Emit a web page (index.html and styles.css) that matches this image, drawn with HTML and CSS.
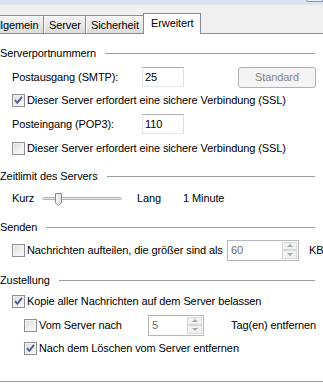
FILE: index.html
```html
<!DOCTYPE html>
<html lang="de">
<head>
<meta charset="utf-8">
<title>Erweitert</title>
<link rel="stylesheet" href="styles.css">
</head>
<body>
<div class="window">
  <div class="titlestrip"><span class="tsbtn"></span></div>
  <div class="tabbar">
    <div class="tab t1">Allgemein</div>
    <div class="tab t2">Server</div>
    <div class="tab t3">Sicherheit</div>
    <div class="tab active">Erweitert</div>
    <div class="tabfill"></div>
  </div>
  <div class="panel">
    <div class="group-h g1"><span>Serverportnummern</span><i class="rule"></i></div>

    <div class="row r1">
      <span class="lbl">Postausgang (SMTP):</span>
      <span class="input">25</span>
      <span class="btn">Standard</span>
    </div>
    <div class="row r2">
      <span class="cb"><svg width="11" height="11" viewBox="0 0 11 11"><path d="M2 5.2 L4.3 7.8 L9 1.8" fill="none" stroke="#4a5d96" stroke-width="1.9"/></svg></span>
      <span>Dieser Server erfordert eine sichere Verbindung (SSL)</span>
    </div>
    <div class="row r3">
      <span class="lbl">Posteingang (POP3):</span>
      <span class="input">110</span>
    </div>
    <div class="row r4">
      <span class="cb"></span>
      <span>Dieser Server erfordert eine sichere Verbindung (SSL)</span>
    </div>

    <div class="group-h g2"><span>Zeitlimit des Servers</span><i class="rule"></i></div>
    <div class="row r5">
      <span class="kurz">Kurz</span>
      <svg class="slider" width="80" height="16" viewBox="0 0 80 16">
        <defs>
          <linearGradient id="th" x1="0" y1="0" x2="1" y2="0">
            <stop offset="0" stop-color="#fbfbfb"/>
            <stop offset="1" stop-color="#dedede"/>
          </linearGradient>
        </defs>
        <rect x="0.5" y="7.5" width="79" height="2" rx="1" fill="#e7eaea" stroke="#b0b4b8"/>
        <path d="M13.5 3.5 H19.5 V13 L16.5 15.5 L13.5 13 Z" fill="url(#th)" stroke="#8a8a8a"/>
      </svg>
      <span class="lang">Lang</span>
      <span>1 Minute</span>
    </div>

    <div class="group-h g3"><span>Senden</span><i class="rule"></i></div>
    <div class="row r6">
      <span class="cb"></span>
      <span class="split">Nachrichten aufteilen, die größer sind als</span>
      <span class="spin kb"><span class="val">60</span><span class="arrows"><span class="up"></span><span class="dn"></span></span></span>
      <span class="unit">KB</span>
    </div>

    <div class="group-h g4"><span>Zustellung</span><i class="rule"></i></div>
    <div class="row r7">
      <span class="cb"><svg width="11" height="11" viewBox="0 0 11 11"><path d="M2 5.2 L4.3 7.8 L9 1.8" fill="none" stroke="#4a5d96" stroke-width="1.9"/></svg></span>
      <span>Kopie aller Nachrichten auf dem Server belassen</span>
    </div>
    <div class="row r8 sub">
      <span class="cb"></span>
      <span class="vom">Vom Server nach</span>
      <span class="spin days"><span class="val">5</span><span class="arrows"><span class="up"></span><span class="dn"></span></span></span>
      <span class="unit2">Tag(en) entfernen</span>
    </div>
    <div class="row r9 sub">
      <span class="cb"><svg width="11" height="11" viewBox="0 0 11 11"><path d="M2 5.2 L4.3 7.8 L9 1.8" fill="none" stroke="#4a5d96" stroke-width="1.9"/></svg></span>
      <span>Nach dem Löschen vom Server entfernen</span>
    </div>
  </div>
</div>
</body>
</html>
```

FILE: styles.css
```css
html, body {
  margin: 0;
  padding: 0;
  background: #ffffff;
}
body {
  font-family: "Liberation Sans", Arial, sans-serif;
  font-size: 11px;
  letter-spacing: -0.1px;
  color: #000;
  width: 323px;
  height: 387px;
  overflow: hidden;
}
.window {
  width: 323px;
  overflow: hidden;
}
.titlestrip {
  height: 5px;
  background: #dae5f2;
  display: flex;
  justify-content: flex-end;
}
.tsbtn {
  width: 15px;
  height: 1px;
  border: 1px solid #8a97a8;
  border-top: none;
  background: #e8eef6;
  border-bottom-left-radius: 2px;
}
.tabbar {
  height: 29px;
  background: #f0f0f0;
  display: flex;
  align-items: flex-end;
}
.tab {
  box-sizing: border-box;
  height: 19px;
  border: 1px solid #898c95;
  background: linear-gradient(#f4f4f4, #e9e9e9 50%, #dcdcdc);
  box-shadow: inset 1px 1px 0 #fcfcfc;
  padding: 3px 0 0 5px;
  line-height: 12px;
  white-space: nowrap;
  flex: none;
}
.t1 {
  width: 59px;
  margin-left: -15px;
}
.t2 {
  width: 43px;
  margin-left: -1px;
}
.t3 {
  width: 59px;
  margin-left: -1px;
}
.tab.active {
  width: 58px;
  height: 21px;
  margin-left: -1px;
  background: #ffffff;
  box-shadow: none;
  border-bottom: none;
  padding: 3px 0 0 7px;
}
.tabfill {
  flex: 1;
  height: 0;
  border-bottom: 1px solid #898c95;
}
.panel {
  background: #ffffff;
  height: 348px;
  border-bottom: 1px solid #a0a0a0;
  padding-top: 12px;
  box-sizing: border-box;
}
.group-h {
  height: 14px;
  display: flex;
  align-items: center;
  padding-right: 8px;
  line-height: 14px;
}
.group-h .rule {
  flex: 1;
  height: 1px;
  background: #a0a0a0;
  margin-left: 9px;
}
.g2 { margin-top: 13px; }
.g3 { margin-top: 14px; }
.g4 { margin-top: 12px; }

.row {
  display: flex;
  align-items: center;
  padding-left: 12px;
  white-space: nowrap;
  height: 16px;
}
.row.sub { padding-left: 24px; }
.r1 { height: 22px; margin-top: 6px; padding-right: 7px; }
.r2 { margin-top: 4px; }
.r3 { height: 20px; margin-top: 6px; }
.r4 { margin-top: 6px; }
.r5 { margin-top: 7px; }
.r6 { height: 22px; margin-top: 5px; }
.r7 { margin-top: 6px; }
.r8 { height: 22px; margin-top: 5px; }
.r9 { margin-top: 4px; }

.lbl {
  width: 130px;
  flex: none;
}
.input {
  box-sizing: border-box;
  width: 42px;
  height: 20px;
  border: 1px solid #abadb3;
  border-color: #abadb3 #dbdfe6 #e3e9ef #e2e3ea;
  padding: 2px 0 0 2px;
  line-height: 14px;
  background: #fff;
}
.btn {
  box-sizing: border-box;
  margin-left: auto;
  width: 78px;
  height: 21px;
  border: 1px solid #adb2b5;
  border-radius: 3px;
  background: #f4f4f4;
  color: #838383;
  display: flex;
  align-items: center;
  justify-content: center;
}
.cb {
  box-sizing: border-box;
  width: 13px;
  height: 13px;
  border: 1px solid #8f8f8f;
  background: linear-gradient(135deg, #dcdcdc, #f6f6f6 80%);
  box-shadow: inset 0 0 0 1px #f4f4f4;
  margin-right: 2px;
  flex: none;
  display: flex;
  align-items: center;
  justify-content: center;
}
.cb svg { display: block; }
.kurz { width: 30px; flex: none; }
.slider { display: block; flex: none; }
.lang { width: 46px; margin-left: 15px; flex: none; }
.split { width: 200px; flex: none; }
.vom { width: 109px; flex: none; }
.spin {
  box-sizing: border-box;
  height: 21px;
  border: 1px solid #b4b8bc;
  background: #fff;
  display: flex;
  color: #6d6d6d;
  flex: none;
}
.spin.kb { width: 72px; }
.spin.days { width: 56px; }
.spin .val {
  flex: 1;
  padding: 3px 0 0 3px;
  line-height: 13px;
}
.arrows {
  width: 15px;
  display: flex;
  flex-direction: column;
  padding: 1px 1px 1px 0;
}
.arrows span {
  flex: 1;
  box-sizing: border-box;
  border: 1px solid #d6d8da;
  background: #f2f2f2;
  display: flex;
  align-items: center;
  justify-content: center;
}
.arrows .up::after {
  content: "";
  border-left: 3px solid transparent;
  border-right: 3px solid transparent;
  border-bottom: 3px solid #a6a6a6;
}
.arrows .dn::after {
  content: "";
  border-left: 3px solid transparent;
  border-right: 3px solid transparent;
  border-top: 3px solid #a6a6a6;
}
.unit { margin-left: 10px; }
.unit2 { margin-left: 27px; }
```
